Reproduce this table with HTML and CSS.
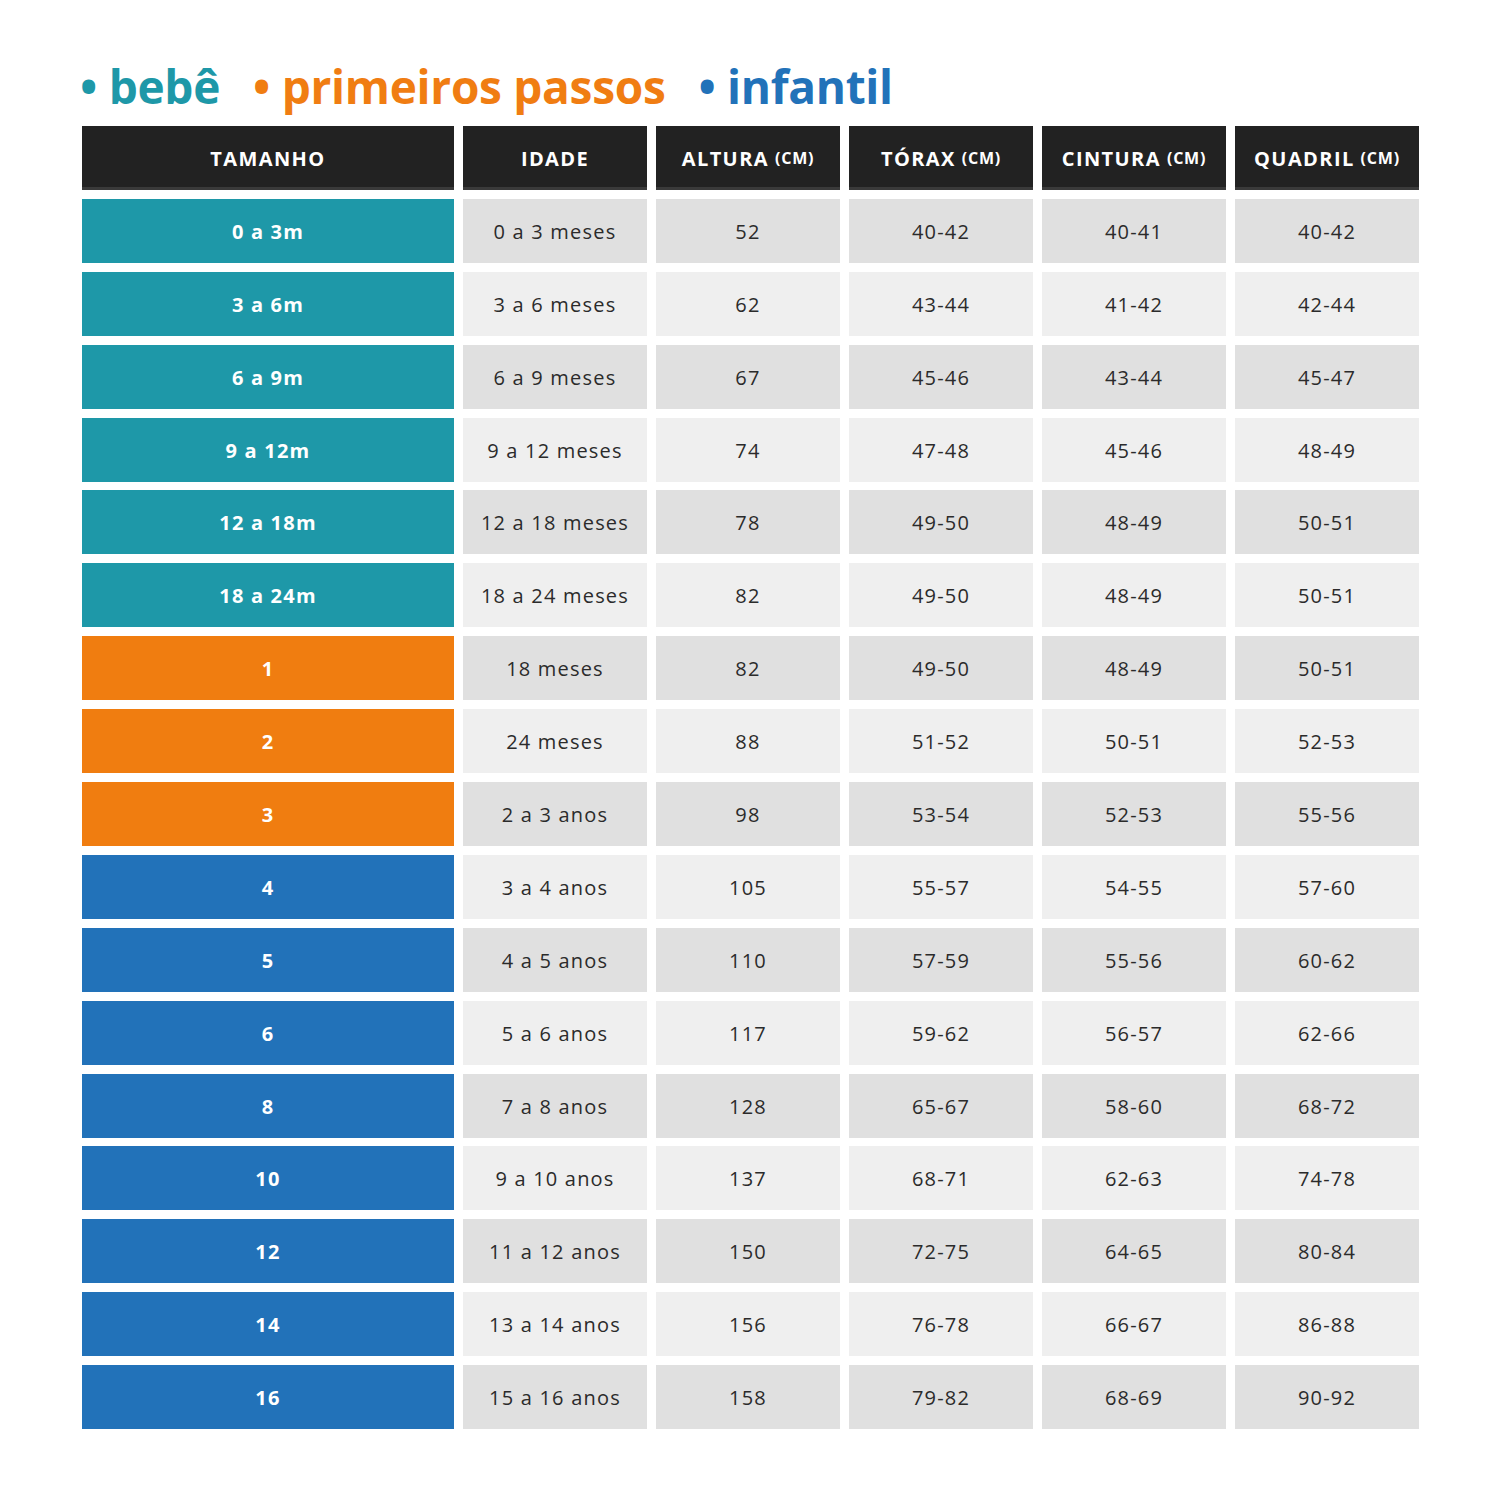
FILE: index.html
```html
<!DOCTYPE html>
<html lang="pt">
<head>
<meta charset="utf-8">
<link rel="stylesheet" href="styles.css">
</head>
<body>
<div class="page">
  <h1 class="title">
    <span class="t-bebe">• bebê</span>
    <span class="t-pp">• primeiros passos</span>
    <span class="t-inf">• infantil</span>
  </h1>
  <div class="table">
    <div class="row head">
      <div class="cell">TAMANHO</div>
      <div class="cell">IDADE</div>
      <div class="cell">ALTURA <small>(CM)</small></div>
      <div class="cell">TÓRAX <small>(CM)</small></div>
      <div class="cell">CINTURA <small>(CM)</small></div>
      <div class="cell">QUADRIL <small>(CM)</small></div>
    </div>
    <div class="row dark"><div class="cell size bebe">0 a 3m</div><div class="cell">0 a 3 meses</div><div class="cell">52</div><div class="cell">40-42</div><div class="cell">40-41</div><div class="cell">40-42</div></div>
    <div class="row light"><div class="cell size bebe">3 a 6m</div><div class="cell">3 a 6 meses</div><div class="cell">62</div><div class="cell">43-44</div><div class="cell">41-42</div><div class="cell">42-44</div></div>
    <div class="row dark"><div class="cell size bebe">6 a 9m</div><div class="cell">6 a 9 meses</div><div class="cell">67</div><div class="cell">45-46</div><div class="cell">43-44</div><div class="cell">45-47</div></div>
    <div class="row light"><div class="cell size bebe">9 a 12m</div><div class="cell">9 a 12 meses</div><div class="cell">74</div><div class="cell">47-48</div><div class="cell">45-46</div><div class="cell">48-49</div></div>
    <div class="row dark"><div class="cell size bebe">12 a 18m</div><div class="cell">12 a 18 meses</div><div class="cell">78</div><div class="cell">49-50</div><div class="cell">48-49</div><div class="cell">50-51</div></div>
    <div class="row light"><div class="cell size bebe">18 a 24m</div><div class="cell">18 a 24 meses</div><div class="cell">82</div><div class="cell">49-50</div><div class="cell">48-49</div><div class="cell">50-51</div></div>
    <div class="row dark"><div class="cell size pp">1</div><div class="cell">18 meses</div><div class="cell">82</div><div class="cell">49-50</div><div class="cell">48-49</div><div class="cell">50-51</div></div>
    <div class="row light"><div class="cell size pp">2</div><div class="cell">24 meses</div><div class="cell">88</div><div class="cell">51-52</div><div class="cell">50-51</div><div class="cell">52-53</div></div>
    <div class="row dark"><div class="cell size pp">3</div><div class="cell">2 a 3 anos</div><div class="cell">98</div><div class="cell">53-54</div><div class="cell">52-53</div><div class="cell">55-56</div></div>
    <div class="row light"><div class="cell size inf">4</div><div class="cell">3 a 4 anos</div><div class="cell">105</div><div class="cell">55-57</div><div class="cell">54-55</div><div class="cell">57-60</div></div>
    <div class="row dark"><div class="cell size inf">5</div><div class="cell">4 a 5 anos</div><div class="cell">110</div><div class="cell">57-59</div><div class="cell">55-56</div><div class="cell">60-62</div></div>
    <div class="row light"><div class="cell size inf">6</div><div class="cell">5 a 6 anos</div><div class="cell">117</div><div class="cell">59-62</div><div class="cell">56-57</div><div class="cell">62-66</div></div>
    <div class="row dark"><div class="cell size inf">8</div><div class="cell">7 a 8 anos</div><div class="cell">128</div><div class="cell">65-67</div><div class="cell">58-60</div><div class="cell">68-72</div></div>
    <div class="row light"><div class="cell size inf">10</div><div class="cell">9 a 10 anos</div><div class="cell">137</div><div class="cell">68-71</div><div class="cell">62-63</div><div class="cell">74-78</div></div>
    <div class="row dark"><div class="cell size inf">12</div><div class="cell">11 a 12 anos</div><div class="cell">150</div><div class="cell">72-75</div><div class="cell">64-65</div><div class="cell">80-84</div></div>
    <div class="row light"><div class="cell size inf">14</div><div class="cell">13 a 14 anos</div><div class="cell">156</div><div class="cell">76-78</div><div class="cell">66-67</div><div class="cell">86-88</div></div>
    <div class="row dark"><div class="cell size inf">16</div><div class="cell">15 a 16 anos</div><div class="cell">158</div><div class="cell">79-82</div><div class="cell">68-69</div><div class="cell">90-92</div></div>
  </div>
</div>
</body>
</html>
```

FILE: styles.css
```css
html, body {
  margin: 0;
  padding: 0;
  background: #ffffff;
}
.page {
  padding: 58px 0 0 80px;
  font-family: "Open Sans", "Liberation Sans", sans-serif;
}
.title {
  margin: 0 0 11px 0;
  height: 57px;
  display: flex;
  gap: 33px;
  font-size: 46px;
  font-weight: 700;
  line-height: 57px;
  letter-spacing: -0.3px;
  white-space: nowrap;
}
.t-bebe { color: #1e98a8; }
.t-pp { color: #f07d12; }
.t-inf { color: #2272b9; }
.table {
  display: flex;
  flex-direction: column;
  gap: 8.9px;
  width: 1337px;
  margin-left: 2px;
}
.row {
  display: grid;
  grid-template-columns: 372px repeat(5, 184px);
  gap: 9px;
  height: 64px;
}
.cell {
  display: flex;
  align-items: center;
  justify-content: center;
  font-size: 20px;
  letter-spacing: 1.2px;
  color: #2b2b2b;
  padding-top: 1px;
  box-sizing: border-box;
}
.dark .cell { background: #e0e0e0; }
.light .cell { background: #efefef; }
.head .cell {
  background: #222222;
  color: #ffffff;
  font-weight: 700;
  font-size: 20px;
  letter-spacing: 1.4px;
  padding-top: 3px;
  border-bottom: 3px solid #3a3a3a;
}
.head small {
  font-size: 16px;
  font-weight: 700;
  margin-left: 6px;
  letter-spacing: 0.8px;
}
.row .size {
  color: #ffffff;
  font-weight: 700;
  font-size: 20px;
  letter-spacing: 1.2px;
}
.row .bebe { background: #1e98a8; }
.row .pp { background: #f07d10; }
.row .inf { background: #2272b9; }
```
